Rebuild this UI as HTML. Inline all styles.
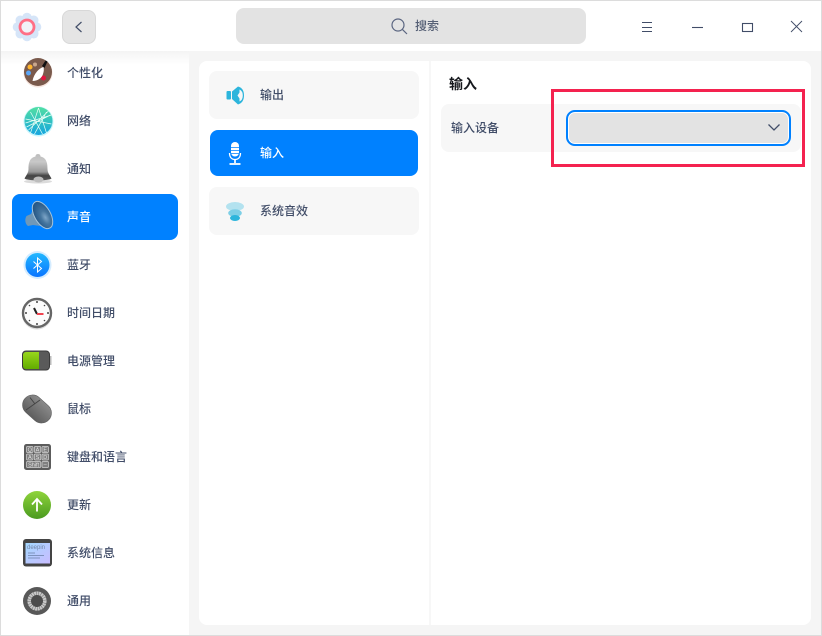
<!DOCTYPE html>
<html lang="zh"><head><meta charset="utf-8"><title>声音</title>
<style>
*{box-sizing:border-box}
html,body{margin:0;padding:0;width:822px;height:636px;overflow:hidden;background:#fff}
body{position:relative;font-family:"Liberation Sans","Noto Sans CJK SC",sans-serif;font-size:12px;color:#414d68}
.a{position:absolute}
.t{position:absolute;line-height:18px;height:18px;white-space:nowrap;font-weight:500}
</style></head><body>
<div class="a" style="left:0;top:0;width:822px;height:636px;background:#f5f5f5"></div>
<!-- sidebar -->
<div class="a" style="left:1px;top:51px;width:188px;height:584px;background:#fff"></div>
<div class="a" style="left:1px;top:51px;width:188px;height:14px;background:linear-gradient(#f4f4f4,#fff)"></div>
<!-- panel -->
<div class="a" style="left:199px;top:61px;width:612px;height:564px;background:#fff;border-radius:8px"></div>
<div class="a" style="left:429px;top:61px;width:2px;height:564px;background:#f7f7f7"></div>
<!-- titlebar -->
<div class="a" style="left:1px;top:1px;width:820px;height:50px;background:#fff"></div>
<div class="a" style="left:0;top:0;width:822px;height:636px;border:1px solid #dcdcdc"></div>

<svg class="a" style="left:12px;top:12px" width="30" height="30" viewBox="0 0 30 30">
<g fill="#d6e5f8"><circle cx="15" cy="15" r="11"/><circle cx="15" cy="5.500" r="4.800"/><circle cx="15" cy="24.500" r="4.800"/><circle cx="5.500" cy="15" r="4.800"/><circle cx="24.500" cy="15" r="4.800"/><circle cx="8.300" cy="8.300" r="4.800"/><circle cx="21.700" cy="8.300" r="4.800"/><circle cx="8.300" cy="21.700" r="4.800"/><circle cx="21.700" cy="21.700" r="4.800"/></g>
<circle cx="15" cy="15" r="7" fill="#f1f3f8" stroke="#ff6f86" stroke-width="2.800"/>
</svg>
<div class="a" style="left:62px;top:10px;width:34px;height:34px;background:#e5e5e5;border:1px solid #d8d8d8;border-radius:8px"></div>
<svg class="a" style="left:62px;top:10px" width="34" height="34"><path d="M19.500 12L14 17l5.500 5" fill="none" stroke="#414d68" stroke-width="1.200"/></svg>

<div class="a" style="left:236px;top:8px;width:350px;height:36px;background:#e3e3e3;border-radius:8px"></div>
<svg class="a" style="left:390px;top:17px" width="18" height="18"><circle cx="8" cy="8" r="6" fill="none" stroke="#5a6580" stroke-width="1.200"/><path d="M12.400 12.400l4.600 4.600" stroke="#5a6580" stroke-width="1.200"/></svg>
<div class="t" style="left:415px;top:17px;color:#555f75">搜索</div>

<svg class="a" style="left:640px;top:20px" width="14" height="14"><path d="M2 2.500h10M2 7.500h10M2 11.500h10" stroke="#414d68" stroke-width="1"/></svg>
<svg class="a" style="left:690px;top:20px" width="16" height="14"><path d="M2 7.500h11" stroke="#414d68" stroke-width="1.100"/></svg>
<svg class="a" style="left:740px;top:20px" width="16" height="14"><rect x="2.500" y="3.500" width="10" height="8" fill="none" stroke="#414d68" stroke-width="1.100"/></svg>
<svg class="a" style="left:789px;top:20px" width="14" height="14"><path d="M2 1l11 11M13 1L2 12" stroke="#414d68" stroke-width=".9"/></svg>

<!-- sidebar selection -->
<div class="a" style="left:12px;top:194px;width:166px;height:46px;background:#0081ff;border-radius:8px"></div>

<!-- 个性化 -->
<svg class="a" style="left:20px;top:51px" width="36" height="38" viewBox="0 0 36 38">
<circle cx="18" cy="22" r="14.500" fill="#f0d4c8" opacity=".6"/><circle cx="18" cy="21" r="14" fill="#7a5a4c"/>
<circle cx="10" cy="16" r="2.500" fill="#ffb52e"/><circle cx="8.500" cy="22" r="2.500" fill="#5aa5f5"/><circle cx="15" cy="13.500" r="2" fill="#c9a78e"/><circle cx="23.500" cy="27" r="2.500" fill="#e0163f"/>
<path d="M22 15l3.500-5.500 2 1-3 6.500z" fill="#111"/><path d="M23.500 16c-4 1-9.500 6-11 14 5 0 9.500-3 10.500-7 1-3 1-5 .5-7z" fill="#fff"/></svg>
<div class="t" style="left:67px;top:64px">个性化</div>

<!-- 网络 -->
<svg class="a" style="left:20px;top:103px" width="36" height="36" viewBox="0 0 36 36">
<defs><linearGradient id="g1" x1="0" y1="0" x2="0" y2="1"><stop offset="0" stop-color="#52dfa2"/><stop offset="1" stop-color="#14a5e0"/></linearGradient></defs>
<circle cx="18.500" cy="18.500" r="15" fill="#c9f6fc"/><circle cx="18.500" cy="18" r="14" fill="url(#g1)"/>
<path d="M18.500 5l-8 25M18.500 5l8 25M5.500 16l26 5M6.500 24l24-12M10.500 9l12 22M26.500 9l-12 22M5.500 20l26-8M8.500 27l20-19" stroke="#eafff6" stroke-width=".7" fill="none"/></svg>
<div class="t" style="left:67px;top:112px">网络</div>

<!-- 通知 -->
<svg class="a" style="left:20px;top:151px" width="36" height="36" viewBox="0 0 36 36">
<defs><linearGradient id="g2" x1="0" y1="0" x2="0" y2="1"><stop offset="0" stop-color="#bdbdbd"/><stop offset=".3" stop-color="#c8c8c8"/><stop offset=".68" stop-color="#999"/><stop offset=".82" stop-color="#444"/><stop offset="1" stop-color="#555"/></linearGradient></defs>
<ellipse cx="18" cy="30.500" rx="14" ry="2" fill="#ccc" opacity=".7"/>
<path d="M18 3c2 0 2.500 1.500 2.500 2.500C27 7 27.500 13 27.500 18c0 4 2.500 6.500 4 9.500-3 2.500-24 2.500-27 0C6 24.500 8.500 22 8.500 18c0-5 .5-11 7-12.500C15.500 4.500 16 3 18 3z" fill="url(#g2)"/><ellipse cx="18.500" cy="28.500" rx="5" ry="3" fill="#bcbcbc"/></svg>
<div class="t" style="left:67px;top:160px">通知</div>

<!-- 声音 -->
<svg class="a" style="left:20px;top:199px" width="36" height="36" viewBox="0 0 36 36">
<defs><radialGradient id="g3" cx=".58" cy=".62" r=".6"><stop offset="0" stop-color="#7ea6c8"/><stop offset=".4" stop-color="#46769f"/><stop offset="1" stop-color="#255684"/></radialGradient></defs>
<path d="M16 4L11 15l-4.500 2c-2 3-1.500 8 1.500 10l5-1 15 2z" fill="#7098b8"/>
<ellipse cx="22.500" cy="16" rx="8" ry="15" transform="rotate(-30 22.500 16)" fill="url(#g3)" stroke="#a6c4da" stroke-width="1"/></svg>
<div class="t" style="left:67px;top:208px;color:#fff">声音</div>

<!-- 蓝牙 -->
<svg class="a" style="left:20px;top:247px" width="36" height="36" viewBox="0 0 36 36">
<defs><linearGradient id="g4" x1="0" y1="0" x2="0" y2="1"><stop offset="0" stop-color="#22b8ff"/><stop offset="1" stop-color="#0a74ff"/></linearGradient></defs>
<circle cx="17.500" cy="18" r="14" fill="#d4ecff"/><circle cx="17.500" cy="18" r="12" fill="url(#g4)"/>
<path d="M13.500 14.500l8 7-4 3.500v-14l4 3.500-8 7" fill="none" stroke="#fff" stroke-width="1"/></svg>
<div class="t" style="left:67px;top:256px">蓝牙</div>

<!-- 时间日期 -->
<svg class="a" style="left:20px;top:295px" width="36" height="36" viewBox="0 0 36 36">
<circle cx="17" cy="19.500" r="15" fill="#ddd"/><circle cx="17" cy="18" r="14" fill="#fbfbfb" stroke="#666" stroke-width="2.400"/>
<g fill="#444"><circle cx="17" cy="7" r="1"/><circle cx="17" cy="29" r="1"/><circle cx="6" cy="18" r="1"/><circle cx="28" cy="18" r="1"/><circle cx="9.500" cy="10.500" r=".8"/><circle cx="24.500" cy="10.500" r=".8"/><circle cx="9.500" cy="25.500" r=".8"/><circle cx="24.500" cy="25.500" r=".8"/></g>
<path d="M14 13l3 6" stroke="#222" stroke-width="2"/><path d="M17 19h6.500" stroke="#f0434f" stroke-width="2"/></svg>
<div class="t" style="left:67px;top:304px">时间日期</div>

<!-- 电源管理 -->
<svg class="a" style="left:20px;top:343px" width="36" height="36" viewBox="0 0 36 36">
<defs><linearGradient id="g5" x1="0" y1="0" x2="0" y2="1"><stop offset="0" stop-color="#98d61c"/><stop offset="1" stop-color="#62ac00"/></linearGradient></defs>
<rect x="30" y="13" width="1.500" height="9" fill="#bbb"/>
<rect x="2.500" y="8" width="27" height="19" rx="3.500" fill="#5a5a5a" stroke="#3b3b3b"/>
<path d="M6 9h13v17H6a3 3 0 0 1-3-3V12a3 3 0 0 1 3-3z" fill="url(#g5)"/></svg>
<div class="t" style="left:67px;top:352px">电源管理</div>

<!-- 鼠标 -->
<svg class="a" style="left:20px;top:391px" width="36" height="36" viewBox="0 0 36 36">
<defs><linearGradient id="g6" x1="0" y1="0" x2="0" y2="1"><stop offset="0" stop-color="#8a8a8a"/><stop offset="1" stop-color="#5e5e5e"/></linearGradient></defs>
<rect x="1" y="8" width="32" height="20" rx="10" transform="rotate(42 17 18)" fill="url(#g6)" stroke="#5c5c5c" stroke-width=".6"/>
<path d="M6 19L20 9M10 6.500l5 6.500" stroke="#444" stroke-width="1" fill="none"/></svg>
<div class="t" style="left:67px;top:400px">鼠标</div>

<!-- 键盘和语言 -->
<svg class="a" style="left:20px;top:439px" width="36" height="36" viewBox="0 0 36 36">
<rect x="4" y="5" width="27" height="26" rx="2.500" fill="#5c5c5c"/>
<g fill="#808080" stroke="#d4d4d4" stroke-width=".7"><rect x="6.500" y="7.500" width="6.500" height="6" rx="1"/><rect x="14.300" y="7.500" width="6.500" height="6" rx="1"/><rect x="22" y="7.500" width="6.500" height="6" rx="1"/><rect x="6.500" y="15" width="6.500" height="6" rx="1"/><rect x="14.300" y="15" width="6.500" height="6" rx="1"/><rect x="22" y="15" width="6.500" height="6" rx="1"/><rect x="6.500" y="22.500" width="14.300" height="6" rx="1"/><rect x="22" y="22.500" width="6.500" height="6" rx="1"/></g>
<g fill="#e4e4e4" font-family="Liberation Sans,sans-serif" font-size="5.500" text-anchor="middle"><text x="9.800" y="12.500">Q</text><text x="17.500" y="12.500">A</text><text x="25.200" y="12.500">E</text><text x="9.800" y="20">A</text><text x="17.500" y="20">S</text><text x="25.200" y="20">D</text><text x="13.600" y="27.500">Shift</text><text x="25.200" y="27">–</text></g></svg>
<div class="t" style="left:67px;top:448px">键盘和语言</div>

<!-- 更新 -->
<svg class="a" style="left:20px;top:487px" width="36" height="36" viewBox="0 0 36 36">
<defs><linearGradient id="g7" x1="0" y1="0" x2="0" y2="1"><stop offset="0" stop-color="#8fd43c"/><stop offset="1" stop-color="#4a9a20"/></linearGradient></defs>
<circle cx="17" cy="18" r="14" fill="url(#g7)"/><path d="M17 24.500V12.500M12 17.500l5-5.500 5 5.500" fill="none" stroke="#fff" stroke-width="1.800"/></svg>
<div class="t" style="left:67px;top:496px">更新</div>

<!-- 系统信息 -->
<svg class="a" style="left:20px;top:535px" width="36" height="36" viewBox="0 0 36 36">
<defs><linearGradient id="g8" x1="0" y1="0" x2="1" y2="1"><stop offset="0" stop-color="#a4d8ff"/><stop offset="1" stop-color="#c8bcff"/></linearGradient></defs>
<rect x="3" y="4" width="29" height="27.500" rx="3" fill="#444"/><rect x="5.500" y="8" width="24.500" height="20.500" fill="url(#g8)"/>
<text x="7" y="14" font-family="Liberation Sans,sans-serif" font-size="6" fill="#7286a8">deepin</text>
<path d="M8 18h7M8 20.500h16M8 23h12" stroke="#6c80a8" stroke-width=".8"/></svg>
<div class="t" style="left:67px;top:544px">系统信息</div>

<!-- 通用 -->
<svg class="a" style="left:20px;top:583px" width="36" height="36" viewBox="0 0 36 36">
<circle cx="17" cy="18" r="14" fill="#585858"/><circle cx="17" cy="18" r="7.800" fill="#4c4c4c" stroke="#c8c8c8" stroke-width="3.600" stroke-dasharray="2 .4"/></svg>
<div class="t" style="left:67px;top:592px">通用</div>

<!-- middle list -->
<div class="a" style="left:209px;top:71px;width:210px;height:48px;background:#f7f7f7;border-radius:8px"></div>
<div class="a" style="left:210px;top:130px;width:208px;height:46px;background:#0081ff;border-radius:8px"></div>
<div class="a" style="left:209px;top:187px;width:210px;height:48px;background:#f7f7f7;border-radius:8px"></div>

<svg class="a" style="left:225px;top:85px" width="20" height="20" viewBox="0 0 20 20"><rect x="1.500" y="6" width="4.500" height="8.500" rx="1" fill="#2cb5dc"/><path d="M7 6.500L13 1.500Q19 3 19 10.500Q19 17.500 13 19.500L7 14z" fill="#2cb5dc"/><path d="M14.500 4.500Q17.800 6 17.800 10.500Q17.800 15 14.500 16.500L14.500 13.500L12.500 10.500L14.500 7.500z" fill="#f7f7f7"/></svg>
<div class="t" style="left:260px;top:86px">输出</div>

<svg class="a" style="left:226px;top:140px" width="18" height="26" viewBox="0 0 18 26"><rect x="5" y="2" width="8" height="14.500" rx="4" fill="#fff"/><path d="M5 7.500h8M5 10.500h8M5 13.500h8" stroke="#0081ff" stroke-width=".7"/><path d="M3.500 13c0 4.500 2.500 6.500 5.500 6.500s5.500-2 5.500-6.500" fill="none" stroke="#fff" stroke-width="1.300"/><path d="M9 19.500V23M3.500 24h11" stroke="#fff" stroke-width="1.700"/></svg>
<div class="t" style="left:260px;top:144px;color:#fff">输入</div>

<svg class="a" style="left:225px;top:201px" width="20" height="20" viewBox="0 0 20 20"><ellipse cx="10" cy="5.500" rx="9" ry="4.500" fill="#b3e2ef"/><ellipse cx="10" cy="12" rx="6.800" ry="3.800" fill="#7dcfe6"/><ellipse cx="10" cy="17" rx="5" ry="3" fill="#2cb5dc"/></svg>
<div class="t" style="left:260px;top:202px">系统音效</div>

<!-- right -->
<div class="t" style="left:449px;top:75px;font-size:14px;font-weight:700;color:#16181d">输入</div>
<div class="a" style="left:441px;top:104px;width:360px;height:48px;background:#f7f7f7;border-radius:8px"></div>
<div class="t" style="left:451px;top:119px">输入设备</div>
<div class="a" style="left:566px;top:110px;width:225px;height:36px;background:#e3e3e3;border:2px solid #0081ff;border-radius:9px;box-shadow:inset 0 0 0 1px #fff"></div>
<svg class="a" style="left:767px;top:122px" width="14" height="12"><path d="M1.500 2.500L7 8l5.500-5.500" fill="none" stroke="#414d68" stroke-width="1.300"/></svg>
<div class="a" style="left:551px;top:89px;width:254px;height:78px;border:3px solid #f4224f"></div>
</body></html>
